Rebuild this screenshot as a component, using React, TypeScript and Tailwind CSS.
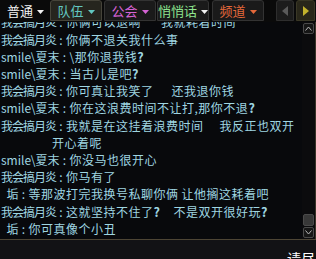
import React from "react";

function Caret({ color }: { color: string }) {
  return (
    <svg width="7" height="4" viewBox="0 0 7 4" className="ml-[4px] mt-[2px]">
      <polygon points="0,0 7,0 3.5,4" fill={color} />
    </svg>
  );
}

type Seg = string | number;
type Line = { name?: string; tight?: boolean; msg?: Seg[]; cont?: string };

const lines: Line[] = [
  { name: "我会搞月炎", tight: true, msg: ["你俩可以退啊", 20, "我就耗着时间"] },
  { name: "我会搞月炎", tight: true, msg: ["你俩不退关我什么事"] },
  { name: "smile\\夏末", msg: ["\\那你退我钱?"] },
  { name: "smile\\夏末", msg: ["当古儿是吧?"] },
  { name: "我会搞月炎", tight: true, msg: ["你可真让我笑了", 18, "还我退你钱"] },
  { name: "smile\\夏末", msg: ["你在这浪费时间不让打,那你不退?"] },
  { name: "我会搞月炎", tight: true, msg: ["我就是在这挂着浪费时间", 16, "我反正也双开"] },
  { cont: "开心着呢" },
  { name: "smile\\夏末", msg: ["你没马也很开心"] },
  { name: "我会搞月炎", tight: true, msg: ["你马有了"] },
  { name: "  垢", msg: ["等那波打完我换号私聊你俩", 3, "让他搁这耗着吧"] },
  { name: "我会搞月炎", tight: true, msg: ["这就坚持不住了?", 13, "不是双开很好玩?"] },
  { name: "  垢", msg: ["你可真像个小丑"] },
];

function Text({ s }: { s: string }) {
  const parts = s.split("?");
  return (
    <>
      {parts.map((p, i) => (
        <React.Fragment key={i}>
          {p}
          {i < parts.length - 1 && <span className="font-bold text-[12.5px]">?</span>}
        </React.Fragment>
      ))}
    </>
  );
}

export default function App() {
  return (
    <div className="w-[316px] h-[259px] flex flex-col overflow-hidden bg-[#08090c] font-['Noto_Sans_CJK_SC',sans-serif]">
      {/* Tabs */}
      <div className="h-[22px] flex items-start bg-[#0a0a0a] shrink-0">
        <div className="w-[48px] h-[21px] flex items-center pl-[7px] text-[13px] text-[#f2f2f2]">
          普通
          <Caret color="#f2f2f2" />
        </div>
        <div className="ml-[2px] w-[52px] h-[21px] flex items-center justify-center rounded-t-[3px] border border-[#46443a] bg-[#26251e] text-[13px] text-[#62c7c0]">
          队伍
          <Caret color="#62c7c0" />
        </div>
        <div className="ml-[2px] w-[52px] h-[21px] flex items-center justify-center rounded-t-[3px] border border-[#333333] bg-[#1a1a1a] text-[13px] text-[#d463d4]">
          公会
          <Caret color="#d463d4" />
        </div>
        <div className="ml-[1px] w-[52px] h-[21px] flex items-center justify-center rounded-t-[3px] border border-[#333333] bg-[#1a1a1a] text-[13px] text-[#8fe58f]">
          悄悄话
          <Caret color="#f0f0f0" />
        </div>
        <div className="ml-[3px] w-[52px] h-[21px] flex items-center justify-center rounded-t-[3px] border border-[#333333] bg-[#1a1a1a] text-[13px] text-[#e4683a]">
          频道
          <Caret color="#e4683a" />
        </div>
        <div className="ml-[12px] w-[18px] h-[21px] flex items-center justify-center rounded-t-[3px] border border-[#2e2e2e] bg-[#1c1c1c]">
          <svg width="6" height="10" viewBox="0 0 6 10">
            <polygon points="6,0 6,10 0,5" fill="#5a5a5a" />
          </svg>
        </div>
        <div className="ml-[2px] w-[19px] h-[21px] flex items-center justify-center rounded-t-[3px] border border-[#3a3826] bg-[#29271a]">
          <svg width="6" height="10" viewBox="0 0 6 10">
            <polygon points="0,0 0,10 6,5" fill="#c2b22c" />
          </svg>
        </div>
      </div>

      {/* Chat area */}
      <div className="flex-1 min-h-0 flex">
        <div className="flex-1 min-w-0 flex flex-col justify-end overflow-hidden pb-[2px] pl-[1px] text-[12px] leading-[17.2px] text-[#9fd6e2] whitespace-pre">
          {lines.map((l, i) =>
            l.cont ? (
              <div key={i} className="pl-[51px] shrink-0 tracking-[0.5px]">
                {l.cont}
              </div>
            ) : (
              <div key={i} className="shrink-0 flex items-baseline">
                <span className={l.tight ? "tracking-[-1px]" : ""}>{l.name}</span>
                <span className="inline-block w-[10px] text-center">:</span>
                <span className="tracking-[0.5px]">
                  {l.msg!.map((s, j) =>
                    typeof s === "number" ? (
                      <span key={j} className="inline-block" style={{ width: s }} />
                    ) : (
                      <Text key={j} s={s} />
                    )
                  )}
                </span>
              </div>
            )
          )}
        </div>
        <div className="w-[14px] flex flex-col justify-between border-r border-[#3a3428] bg-[#0b0b0d] pt-[1px] pb-[1px]">
          <div className="ml-[1px] w-[11px] h-[11px] rounded-[2px] border border-[#4a4a4a] bg-[#161616] flex items-center justify-center">
            <svg width="7" height="5" viewBox="0 0 7 5">
              <polyline points="0.5,4.5 3.5,1 6.5,4.5" fill="none" stroke="#b8b8b8" strokeWidth="1" />
            </svg>
          </div>
          <div className="flex flex-col gap-[1px]">
            <div className="ml-[1px] w-[11px] h-[12px] rounded-[2px] border border-[#4a4a4a] bg-[#383838]" />
            <div className="ml-[1px] w-[11px] h-[11px] rounded-[2px] border border-[#4a4a4a] bg-[#161616] flex items-center justify-center">
              <svg width="7" height="5" viewBox="0 0 7 5">
                <polyline points="0.5,0.5 3.5,4 6.5,0.5" fill="none" stroke="#b8b8b8" strokeWidth="1" />
              </svg>
            </div>
          </div>
        </div>
      </div>

      <div className="h-px bg-[#4d4535] shrink-0" />

      {/* Bottom */}
      <div className="h-[19px] shrink-0 bg-[#121215] flex justify-end overflow-hidden">
        <div className="pt-[10px] pr-[1px] text-[14px] leading-[16px] text-white">请尽</div>
      </div>
    </div>
  );
}
